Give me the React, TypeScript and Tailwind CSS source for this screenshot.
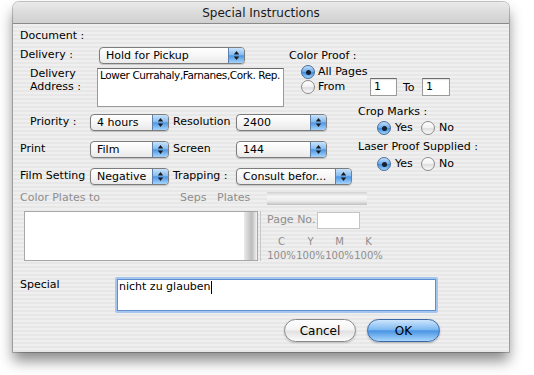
import type { ReactNode } from "react";

const stripes =
  "bg-[repeating-linear-gradient(180deg,#efefef_0px,#efefef_2px,#e7e7e7_2px,#e7e7e7_4px)]";

function Arrows() {
  return (
    <svg width="7" height="11" viewBox="0 0 7 11">
      <polygon points="3.5,1 6.2,4.6 0.8,4.6" fill="#1b1b1b" />
      <polygon points="0.8,6.4 6.2,6.4 3.5,10" fill="#1b1b1b" />
    </svg>
  );
}

function Popup({ value, className }: { value: string; className: string }) {
  return (
    <div
      className={`flex h-[17px] overflow-hidden rounded-[4px] border border-[#7c7c7c] bg-[linear-gradient(180deg,#ffffff_0%,#f6f6f6_50%,#e9e9e9_100%)] shadow-[0_1px_1px_rgba(0,0,0,0.18)] ${className}`}
    >
      <span className="flex-1 truncate pl-[6px] leading-[15px]">{value}</span>
      <span className="flex w-[16px] items-center justify-center border-l border-[#5c7fae] bg-[linear-gradient(180deg,#c9e2fb_0%,#86bdf1_45%,#4d96e5_52%,#a6d4fb_100%)]">
        <Arrows />
      </span>
    </div>
  );
}

function Radio({ on }: { on?: boolean }) {
  return on ? (
    <span className="flex h-[14px] w-[14px] shrink-0 items-center justify-center rounded-full border border-[#4a6d9a] bg-[linear-gradient(180deg,#c3defa_0%,#6eabec_48%,#3f8de0_55%,#a0d2fb_100%)]">
      <span className="h-[5px] w-[5px] rounded-full bg-[#16202e]" />
    </span>
  ) : (
    <span className="h-[14px] w-[14px] shrink-0 rounded-full border border-[#8b8b8b] bg-[linear-gradient(180deg,#ffffff_0%,#f1f1f1_48%,#dedede_55%,#fbfbfb_100%)]" />
  );
}

function Field({ value, className }: { value?: string; className: string }) {
  return (
    <div
      className={`border border-[#9a9a9a] border-t-[#6c6c6c] bg-white pl-[3px] leading-[16px] shadow-[inset_0_1px_1px_rgba(0,0,0,0.12)] ${className}`}
    >
      {value}
    </div>
  );
}

function Row({ children, className = "" }: { children: ReactNode; className?: string }) {
  return <div className={`flex h-[17px] items-center ${className}`}>{children}</div>;
}

export default function App() {
  return (
    <div className="h-[375px] w-[534px] overflow-hidden bg-white pl-[13px] pt-[2px] font-['DejaVu_Sans',sans-serif] text-[11px] text-black">
      <div className="h-[350px] w-[496px] overflow-hidden rounded-t-[6px] shadow-[0_0_0_1px_rgba(0,0,0,0.22),0_9px_14px_rgba(0,0,0,0.45)]">
        <div className="flex h-[22px] items-center justify-center border-b border-[#8a8a8a] bg-[linear-gradient(180deg,#eaeaea_0%,#dcdcdc_50%,#d0d0d0_100%)] text-[12px] text-[#1a1a1a]">
          Special Instructions
        </div>

        <div className={`flex h-[328px] flex-col ${stripes}`}>
          <div className="mt-[5px] h-[14px] pl-[7px] leading-[14px]">Document :</div>

          {/* delivery + color proof */}
          <div className="mt-[4px] flex">
            <div className="w-[276px] pl-[7px]">
              <Row>
                <span className="w-[79px]">Delivery :</span>
                <Popup value="Hold for Pickup" className="w-[146px]" />
              </Row>
              <div className="mt-[4px] flex">
                <div className="-mt-[1px] w-[77px] pl-[10px] leading-[13px]">
                  Delivery
                  <br />
                  Address :
                </div>
                <div className="h-[39px] w-[187px] overflow-hidden whitespace-nowrap border border-[#9a9a9a] border-t-[#6c6c6c] bg-white pl-[2px] text-[10.5px] leading-[13px] tracking-[-0.4px]">
                  Lower Currahaly,Farnanes,Cork. Rep.
                </div>
              </div>
            </div>
            <div className="w-[200px]">
              <div className="mt-[2px] h-[14px] leading-[14px]">Color Proof :</div>
              <div className="mt-[2px] flex h-[14px] items-center pl-[12px]">
                <Radio on />
                <span className="ml-[3px]">All Pages</span>
              </div>
              <div className="-mt-[1px] flex h-[18px] items-center pl-[12px]">
                <Radio />
                <span className="ml-[3px] w-[52px]">From</span>
                <Field value="1" className="h-[18px] w-[27px]" />
                <span className="ml-[6px] w-[19px] pt-[2px]">To</span>
                <Field value="1" className="h-[18px] w-[28px]" />
              </div>
            </div>
          </div>

          {/* priority / print / film + crop marks */}
          <div className="flex">
            <div className="w-[339px] pl-[7px]">
              <Row className="mt-[7px]">
                <span className="w-[70px] pl-[10px]">Priority :</span>
                <Popup value="4 hours" className="w-[79px]" />
                <span className="ml-[4px] w-[63px]">Resolution</span>
                <Popup value="2400" className="w-[91px]" />
              </Row>
              <Row className="mt-[10px]">
                <span className="w-[70px]">Print</span>
                <Popup value="Film" className="w-[79px]" />
                <span className="ml-[4px] w-[63px]">Screen</span>
                <Popup value="144" className="w-[91px]" />
              </Row>
              <Row className="mt-[10px]">
                <span className="w-[70px]">Film Setting</span>
                <Popup value="Negative" className="w-[79px]" />
                <span className="ml-[4px] w-[63px]">Trapping :</span>
                <Popup value="Consult befor..." className="w-[116px]" />
              </Row>
            </div>
            <div className="-mt-[2px] ml-[6px]">
              <div className="h-[14px] leading-[14px]">Crop Marks :</div>
              <div className="mt-[2px] flex h-[14px] items-center pl-[19px]">
                <Radio on />
                <span className="ml-[4px] w-[26px]">Yes</span>
                <Radio />
                <span className="ml-[4px]">No</span>
              </div>
              <div className="mt-[5px] h-[14px] leading-[14px]">Laser Proof Supplied :</div>
              <div className="mt-[3px] flex h-[14px] items-center pl-[19px]">
                <Radio on />
                <span className="ml-[4px] w-[26px]">Yes</span>
                <Radio />
                <span className="ml-[4px]">No</span>
              </div>
            </div>
          </div>

          {/* colour plates (disabled) */}
          <div className="mt-[6px] flex h-[14px] items-center pl-[7px] text-[#8e8e8e]">
            <span className="w-[160px]">Color Plates to</span>
            <span className="w-[37px]">Seps</span>
            <span className="w-[50px]">Plates</span>
            <span className="h-[13px] w-[100px] bg-[linear-gradient(180deg,#d2d2d2_0%,#f6f6f6_35%,#ebebeb_70%,#c0c0c0_100%)]" />
          </div>
          <div className="mt-[6px] flex pl-[11px] text-[#8e8e8e]">
            <div className="flex h-[50px] w-[234px] border border-[#a8a8a8] bg-white">
              <div className="flex-1" />
              <div className="w-[13px] bg-[linear-gradient(90deg,#eaeaea_0%,#bcbcbc_60%,#f3f3f3_100%)]" />
            </div>
            <div className="ml-[2px] h-[50px] w-px bg-[#c8c8c8]" />
            <div className="ml-[6px]">
              <div className="flex h-[18px] items-center">
                <span className="w-[50px]">Page No.</span>
                <div className="h-[17px] w-[43px] border border-[#c4c4c4] bg-white" />
              </div>
              <div className="mt-[6px] grid h-[13px] grid-cols-[29px_29px_29px_29px] text-center text-[10px] leading-[13px]">
                <span>C</span>
                <span>Y</span>
                <span>M</span>
                <span>K</span>
              </div>
              <div className="mt-px grid h-[13px] grid-cols-[29px_29px_29px_29px] text-center text-[10px] leading-[13px]">
                <span>100%</span>
                <span>100%</span>
                <span>100%</span>
                <span>100%</span>
              </div>
            </div>
          </div>

          {/* special */}
          <div className="mt-[15px] flex">
            <span className="w-[102px] pl-[7px] pt-px leading-[14px]">Special</span>
            <div className="h-[36px] w-[323px] rounded-[2px] bg-[#a3c5ee] p-[2px]">
              <div className="flex h-full items-start border border-[#5f8fcf] bg-white pl-px">
                <span className="leading-[14px]">nicht zu glauben</span>
                <span className="mt-px h-[13px] w-px bg-black" />
              </div>
            </div>
          </div>

          <div className="mt-[6px] flex justify-end gap-[11px] pr-[69px] text-[12px]">
            <button
              type="button"
              className="h-[23px] w-[72px] rounded-full border border-[#8a8a8a] bg-[linear-gradient(180deg,#ffffff_0%,#f3f3f3_48%,#e0e0e0_52%,#fbfbfb_100%)] shadow-[0_1px_2px_rgba(0,0,0,0.2)]"
            >
              Cancel
            </button>
            <button
              type="button"
              className="h-[23px] w-[73px] rounded-full border border-[#3b69a8] bg-[linear-gradient(180deg,#cde5fc_0%,#7fbaf1_45%,#4a94e4_52%,#a8d7fc_100%)] shadow-[0_1px_2px_rgba(0,0,0,0.25)]"
            >
              OK
            </button>
          </div>
        </div>
      </div>
    </div>
  );
}
